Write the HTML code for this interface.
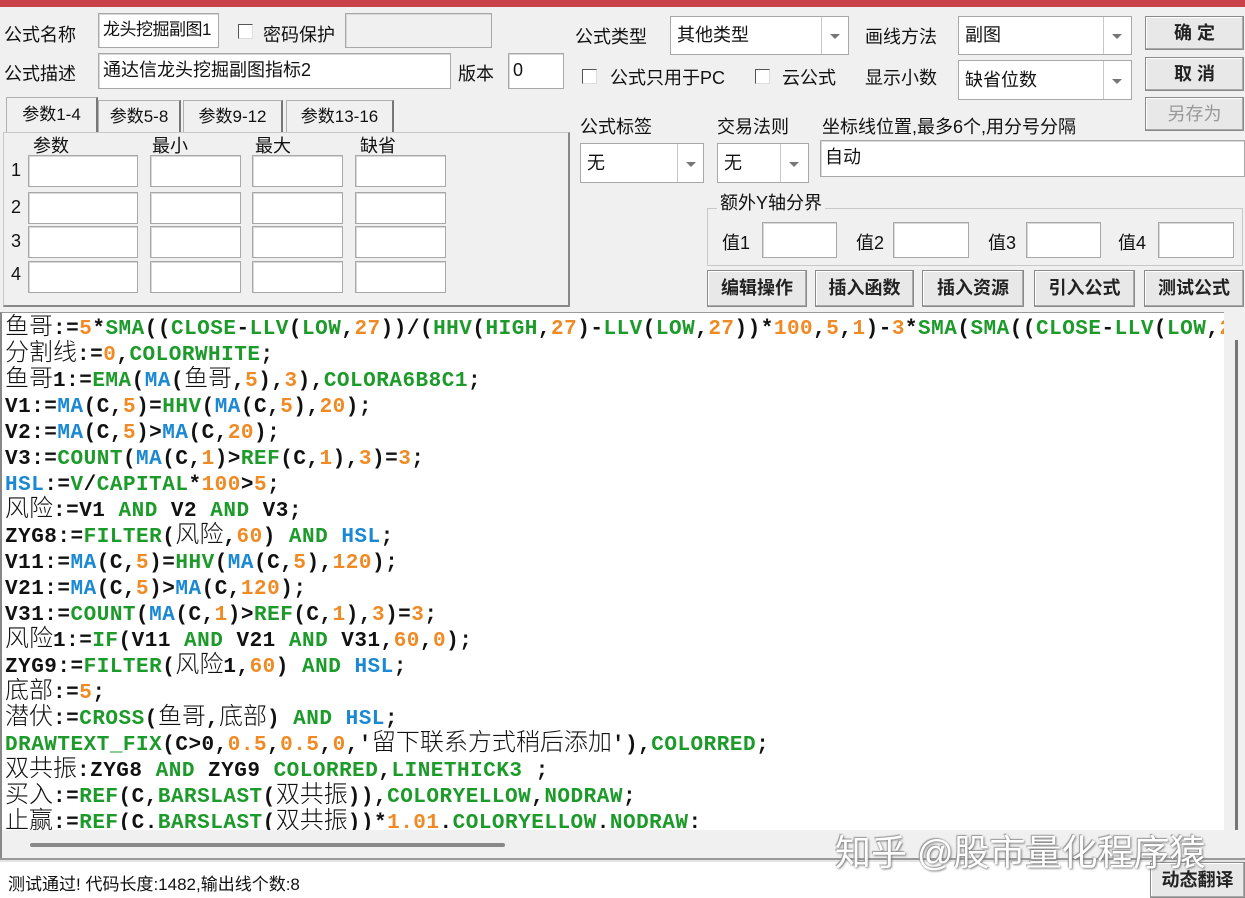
<!DOCTYPE html>
<html><head><meta charset="utf-8"><style>
*{margin:0;padding:0;box-sizing:border-box}
body{width:1245px;height:898px;background:#f0f0f0;position:relative;overflow:hidden;font-family:"Liberation Sans","Noto Sans CJK SC",sans-serif;font-size:18px;color:#111}
.a{position:absolute;white-space:nowrap}
.in{position:absolute;background:#fff;border:1px solid #a8a8a8;box-shadow:inset 1px 1px 0 #d8d8d8;padding:2px 4px;line-height:28px;overflow:hidden;white-space:nowrap}
.sel{position:absolute;background:#fff;border:1px solid #a8a8a8;padding:0 6px}
.sel .dv{position:absolute;top:0;bottom:0;border-left:1px solid #c8c8c8}
.sel .ar{position:absolute;width:0;height:0;border-left:5px solid transparent;border-right:5px solid transparent;border-top:5px solid #777}
.cb{position:absolute;width:15px;height:15px;background:#fff;border:1px solid #555;border-right-color:#ddd;border-bottom-color:#ddd}
.bt{position:absolute;background:#e8e8e8;border:1px solid #8a8a8a;box-shadow:inset -1px -1px 0 #aaa,inset 1px 1px 0 #fff;text-align:center;font-weight:bold;color:#222}
.tab{position:absolute;border:1px solid #b0b0b0;border-bottom:none;border-right:2px solid #777;text-align:center;line-height:32px;background:#f0f0f0;font-size:17px}
#code{position:absolute;left:0;top:312px;width:1224px;height:518px;background:#fff;border-left:2px solid #888;border-top:1px solid #999;overflow:hidden;font-family:"Liberation Mono",monospace;font-weight:bold;font-size:21px;letter-spacing:0.5px;line-height:26px;padding-left:3px;padding-top:4px;color:#111}
#code div{white-space:pre;height:26px;line-height:26px;overflow:visible}
.z{font-family:"Noto Sans CJK SC",sans-serif;font-weight:300;font-size:24px;letter-spacing:0;line-height:0}
.g{color:#1c9a2a}.b{color:#1a88d2}.o{color:#f08a24}
</style></head><body>
<div class="a" style="left:0;top:0;width:1245px;height:7px;background:#c9424a"></div>

<div class="a" style="left:4px;top:21px">公式名称</div>
<div class="in" style="left:98px;top:13px;width:121px;height:35px;font-size:17px;letter-spacing:-0.5px">龙头挖掘副图1</div>
<div class="cb" style="left:238px;top:24px"></div>
<div class="a" style="left:263px;top:21px">密码保护</div>
<div class="in" style="left:345px;top:13px;width:147px;height:35px;background:#f0f0f0"></div>

<div class="a" style="left:4px;top:60px">公式描述</div>
<div class="in" style="left:98px;top:53px;width:353px;height:36px">通达信龙头挖掘副图指标2</div>
<div class="a" style="left:458px;top:60px">版本</div>
<div class="in" style="left:508px;top:53px;width:56px;height:36px">0</div>

<div class="tab" style="left:6px;top:97px;width:92px;height:36px;line-height:34px">参数1-4</div>
<div class="tab" style="left:98px;top:100px;width:83px;height:32px">参数5-8</div>
<div class="tab" style="left:183px;top:100px;width:100px;height:32px">参数9-12</div>
<div class="tab" style="left:286px;top:100px;width:108px;height:32px">参数13-16</div>
<div class="a" style="left:3px;top:132px;width:567px;height:175px;border:1px solid #c8c8c8;border-right:2px solid #888;border-bottom:2px solid #888"></div>
<div class="a" style="left:33px;top:132px">参数</div>
<div class="a" style="left:152px;top:132px">最小</div>
<div class="a" style="left:255px;top:132px">最大</div>
<div class="a" style="left:360px;top:132px">缺省</div>
<div class="a" style="left:11px;top:160px">1</div><div class="a" style="left:11px;top:197px">2</div><div class="a" style="left:11px;top:231px">3</div><div class="a" style="left:11px;top:264px">4</div>
<div class="in" style="left:28px;top:155px;width:110px;height:32px"></div><div class="in" style="left:150px;top:155px;width:91px;height:32px"></div><div class="in" style="left:252px;top:155px;width:91px;height:32px"></div><div class="in" style="left:355px;top:155px;width:91px;height:32px"></div>
<div class="in" style="left:28px;top:192px;width:110px;height:32px"></div><div class="in" style="left:150px;top:192px;width:91px;height:32px"></div><div class="in" style="left:252px;top:192px;width:91px;height:32px"></div><div class="in" style="left:355px;top:192px;width:91px;height:32px"></div>
<div class="in" style="left:28px;top:226px;width:110px;height:32px"></div><div class="in" style="left:150px;top:226px;width:91px;height:32px"></div><div class="in" style="left:252px;top:226px;width:91px;height:32px"></div><div class="in" style="left:355px;top:226px;width:91px;height:32px"></div>
<div class="in" style="left:28px;top:261px;width:110px;height:32px"></div><div class="in" style="left:150px;top:261px;width:91px;height:32px"></div><div class="in" style="left:252px;top:261px;width:91px;height:32px"></div><div class="in" style="left:355px;top:261px;width:91px;height:32px"></div>

<div class="a" style="left:575px;top:23px">公式类型</div>
<div class="sel" style="left:670px;top:16px;width:179px;height:39px;line-height:37px">其他类型<div class="dv" style="left:150px"></div><div class="ar" style="left:159px;top:17px"></div></div>
<div class="a" style="left:865px;top:23px">画线方法</div>
<div class="sel" style="left:958px;top:16px;width:174px;height:39px;line-height:37px">副图<div class="dv" style="left:144px"></div><div class="ar" style="left:153px;top:17px"></div></div>
<div class="bt" style="left:1145px;top:16px;width:99px;height:34px;line-height:32px">确 定</div>
<div class="bt" style="left:1145px;top:57px;width:99px;height:34px;line-height:32px">取 消</div>
<div class="bt" style="left:1145px;top:97px;width:99px;height:34px;line-height:32px;color:#999;font-weight:normal">另存为</div>

<div class="cb" style="left:582px;top:69px"></div>
<div class="a" style="left:610px;top:64px">公式只用于PC</div>
<div class="cb" style="left:755px;top:69px"></div>
<div class="a" style="left:782px;top:64px">云公式</div>
<div class="a" style="left:865px;top:64px">显示小数</div>
<div class="sel" style="left:958px;top:60px;width:174px;height:40px;line-height:38px">缺省位数<div class="dv" style="left:144px"></div><div class="ar" style="left:153px;top:18px"></div></div>

<div class="a" style="left:580px;top:113px">公式标签</div>
<div class="a" style="left:717px;top:113px">交易法则</div>
<div class="a" style="left:822px;top:113px">坐标线位置,最多6个,用分号分隔</div>
<div class="sel" style="left:580px;top:143px;width:124px;height:40px;line-height:38px">无<div class="dv" style="left:96px"></div><div class="ar" style="left:105px;top:18px"></div></div>
<div class="sel" style="left:717px;top:143px;width:92px;height:40px;line-height:38px">无<div class="dv" style="left:62px"></div><div class="ar" style="left:71px;top:18px"></div></div>
<div class="in" style="left:820px;top:140px;width:425px;height:37px">自动</div>

<div class="a" style="left:707px;top:208px;width:536px;height:58px;border:1px solid #c8c8c8"></div>
<div class="a" style="left:717px;top:189px;background:#f0f0f0;padding:0 3px">额外Y轴分界</div>
<div class="a" style="left:722px;top:229px">值1</div><div class="in" style="left:762px;top:222px;width:75px;height:36px"></div>
<div class="a" style="left:856px;top:229px">值2</div><div class="in" style="left:893px;top:222px;width:76px;height:36px"></div>
<div class="a" style="left:988px;top:229px">值3</div><div class="in" style="left:1026px;top:222px;width:75px;height:36px"></div>
<div class="a" style="left:1118px;top:229px">值4</div><div class="in" style="left:1158px;top:222px;width:76px;height:36px"></div>

<div class="bt" style="left:707px;top:270px;width:100px;height:37px;line-height:35px">编辑操作</div>
<div class="bt" style="left:815px;top:270px;width:99px;height:37px;line-height:35px">插入函数</div>
<div class="bt" style="left:922px;top:270px;width:102px;height:37px;line-height:35px">插入资源</div>
<div class="bt" style="left:1034px;top:270px;width:101px;height:37px;line-height:35px">引入公式</div>
<div class="bt" style="left:1144px;top:270px;width:100px;height:37px;line-height:35px">测试公式</div>

<div id="code">
<div><span class="z">鱼哥</span>:=<span class="o">5</span>*<span class="g">SMA</span>((<span class="g">CLOSE</span>-<span class="g">LLV</span>(<span class="g">LOW</span>,<span class="o">27</span>))/(<span class="g">HHV</span>(<span class="g">HIGH</span>,<span class="o">27</span>)-<span class="g">LLV</span>(<span class="g">LOW</span>,<span class="o">27</span>))*<span class="o">100</span>,<span class="o">5</span>,<span class="o">1</span>)-<span class="o">3</span>*<span class="g">SMA</span>(<span class="g">SMA</span>((<span class="g">CLOSE</span>-<span class="g">LLV</span>(<span class="g">LOW</span>,<span class="o">27</span></div>
<div><span class="z">分割线</span>:=<span class="o">0</span>,<span class="g">COLORWHITE</span>;</div>
<div><span class="z">鱼哥</span>1:=<span class="g">EMA</span>(<span class="b">MA</span>(<span class="z">鱼哥</span>,<span class="o">5</span>),<span class="o">3</span>),<span class="g">COLORA6B8C1</span>;</div>
<div>V1:=<span class="b">MA</span>(C,<span class="o">5</span>)=<span class="g">HHV</span>(<span class="b">MA</span>(C,<span class="o">5</span>),<span class="o">20</span>);</div>
<div>V2:=<span class="b">MA</span>(C,<span class="o">5</span>)&gt;<span class="b">MA</span>(C,<span class="o">20</span>);</div>
<div>V3:=<span class="g">COUNT</span>(<span class="b">MA</span>(C,<span class="o">1</span>)&gt;<span class="g">REF</span>(C,<span class="o">1</span>),<span class="o">3</span>)=<span class="o">3</span>;</div>
<div><span class="b">HSL</span>:=<span class="g">V</span>/<span class="g">CAPITAL</span>*<span class="o">100</span>&gt;<span class="o">5</span>;</div>
<div><span class="z">风险</span>:=V1 <span class="g">AND</span> V2 <span class="g">AND</span> V3;</div>
<div>ZYG8:=<span class="g">FILTER</span>(<span class="z">风险</span>,<span class="o">60</span>) <span class="g">AND</span> <span class="b">HSL</span>;</div>
<div>V11:=<span class="b">MA</span>(C,<span class="o">5</span>)=<span class="g">HHV</span>(<span class="b">MA</span>(C,<span class="o">5</span>),<span class="o">120</span>);</div>
<div>V21:=<span class="b">MA</span>(C,<span class="o">5</span>)&gt;<span class="b">MA</span>(C,<span class="o">120</span>);</div>
<div>V31:=<span class="g">COUNT</span>(<span class="b">MA</span>(C,<span class="o">1</span>)&gt;<span class="g">REF</span>(C,<span class="o">1</span>),<span class="o">3</span>)=<span class="o">3</span>;</div>
<div><span class="z">风险</span>1:=<span class="g">IF</span>(V11 <span class="g">AND</span> V21 <span class="g">AND</span> V31,<span class="o">60</span>,<span class="o">0</span>);</div>
<div>ZYG9:=<span class="g">FILTER</span>(<span class="z">风险</span>1,<span class="o">60</span>) <span class="g">AND</span> <span class="b">HSL</span>;</div>
<div><span class="z">底部</span>:=<span class="o">5</span>;</div>
<div><span class="z">潜伏</span>:=<span class="g">CROSS</span>(<span class="z">鱼哥</span>,<span class="z">底部</span>) <span class="g">AND</span> <span class="b">HSL</span>;</div>
<div><span class="g">DRAWTEXT_FIX</span>(C&gt;0,<span class="o">0.5</span>,<span class="o">0.5</span>,<span class="o">0</span>,'<span class="z">留下联系方式稍后添加</span>'),<span class="g">COLORRED</span>;</div>
<div><span class="z">双共振</span>:ZYG8 <span class="g">AND</span> ZYG9 <span class="g">COLORRED</span>,<span class="g">LINETHICK3</span> ;</div>
<div><span class="z">买入</span>:=<span class="g">REF</span>(C,<span class="g">BARSLAST</span>(<span class="z">双共振</span>)),<span class="g">COLORYELLOW</span>,<span class="g">NODRAW</span>;</div>
<div><span class="z">止赢</span>:=<span class="g">REF</span>(C.<span class="g">BARSLAST</span>(<span class="z">双共振</span>))*<span class="o">1.01</span>.<span class="g">COLORYELLOW</span>.<span class="g">NODRAW</span>:</div>
</div>
<div class="a" style="left:1224px;top:312px;width:21px;height:518px;background:#f0f0f0"></div>
<div class="a" style="left:1235px;top:340px;width:3px;height:490px;background:#777"></div>
<div class="a" style="left:0;top:830px;width:1245px;height:28px;background:#f0f0f0;border-left:2px solid #888"></div>
<div class="a" style="left:30px;top:843px;width:475px;height:4px;background:#888;border-radius:2px"></div>
<div class="a" style="left:0;top:858px;width:1245px;height:4px;border-top:2px solid #999;background:#e4e4e4"></div>
<div class="a" style="left:0;top:862px;width:1150px;height:36px;background:#fff"></div>
<div class="a" style="left:8px;top:870px;font-size:17px">测试通过! 代码长度:1482,输出线个数:8</div>
<div class="bt" style="left:1150px;top:862px;width:95px;height:36px;line-height:34px;font-weight:bold">动态翻译</div>
<div class="a" style="left:835px;top:824px;font-size:36px;color:#fff;text-shadow:1px 1px 2px #777,-1px -1px 1px #999;letter-spacing:0">知乎 @股市量化程序猿</div>
</body></html>
